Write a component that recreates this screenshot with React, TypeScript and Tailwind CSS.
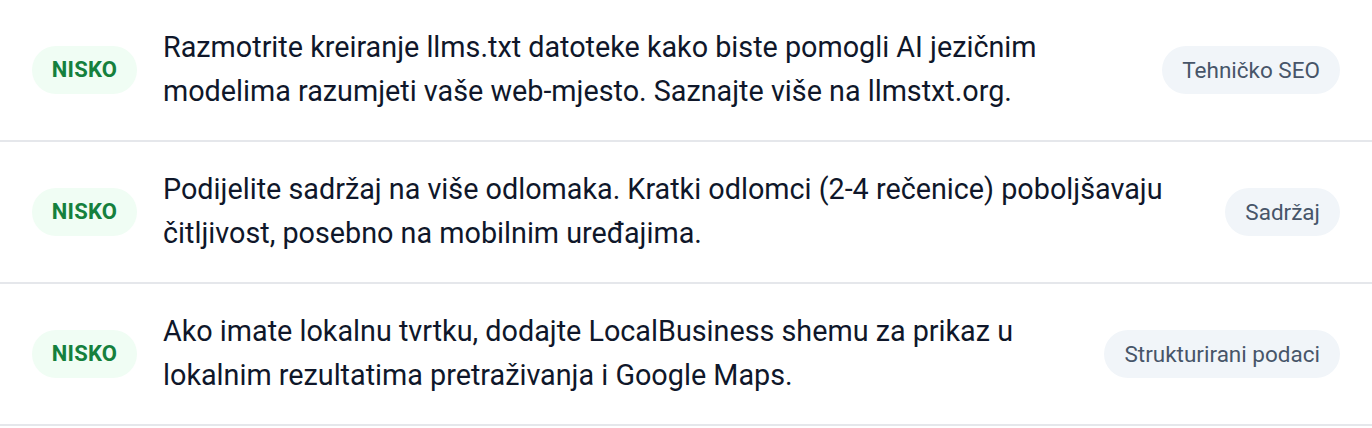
import React from "react";

type Item = { text: string; tag: string };

const items: Item[] = [
  {
    text: "Razmotrite kreiranje llms.txt datoteke kako biste pomogli AI jezičnim modelima razumjeti vaše web-mjesto. Saznajte više na llmstxt.org.",
    tag: "Tehničko SEO",
  },
  {
    text: "Podijelite sadržaj na više odlomaka. Kratki odlomci (2-4 rečenice) poboljšavaju čitljivost, posebno na mobilnim uređajima.",
    tag: "Sadržaj",
  },
  {
    text: "Ako imate lokalnu tvrtku, dodajte LocalBusiness shemu za prikaz u lokalnim rezultatima pretraživanja i Google Maps.",
    tag: "Strukturirani podaci",
  },
];

function Row({ item }: { item: Item }) {
  return (
    <div className="flex h-[142px] items-center gap-6 border-b-2 border-[#e5e7eb] pl-8 pr-8">
      <span className="flex h-[48px] w-[105px] shrink-0 items-center justify-center rounded-full bg-[#f0fdf4] text-[22px] font-bold leading-none tracking-[0.01em] text-[#15803d]">
        NISKO
      </span>
      <p className="min-w-0 flex-1 pl-[2px] pb-[2px] text-[28.75px] leading-[44px] text-[#0f172a]">
        {item.text}
      </p>
      <span className="flex h-[48px] shrink-0 items-center rounded-full bg-[#f1f5f9] px-[20px] text-[22.5px] leading-none text-[#475569]">
        {item.tag}
      </span>
    </div>
  );
}

export default function App() {
  return (
    <div className="w-[1372px] bg-white font-['Roboto',sans-serif]">
      {items.map((it) => (
        <Row key={it.tag} item={it} />
      ))}
    </div>
  );
}
